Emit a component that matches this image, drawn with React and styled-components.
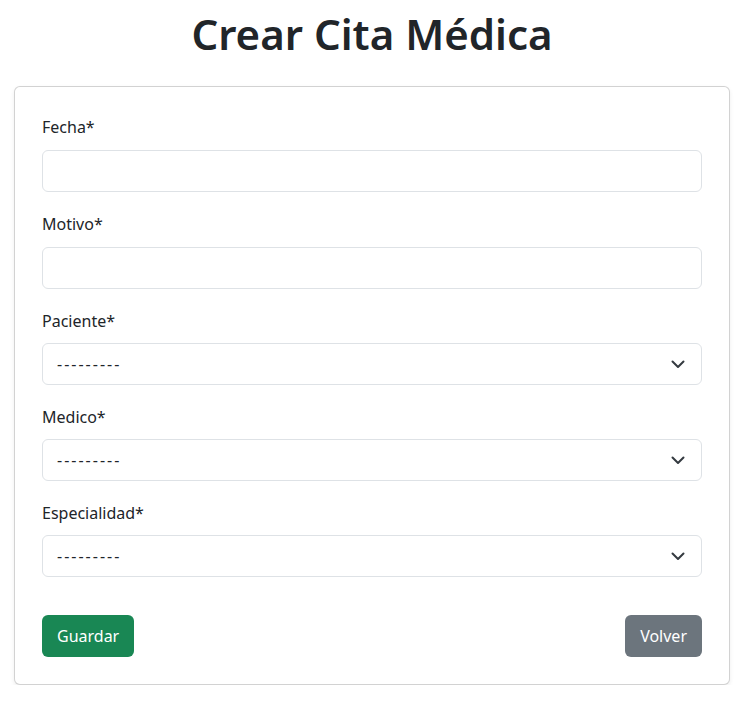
import React from "react";
import styled, { createGlobalStyle } from "styled-components";

const Global = createGlobalStyle`
  html, body { margin: 0; padding: 0; background: #fff; }
  body {
    font-family: "Noto Sans", "Open Sans", sans-serif;
    color: #212529;
    font-size: 16px;
  }
  * { box-sizing: border-box; }
`;

const Page = styled.div`
  width: 754px;
  padding: 0 24px 0 14px;
`;

const Title = styled.h1`
  margin: 0;
  padding-top: 6px;
  height: 86px;
  text-align: center;
  font-size: 42px;
  line-height: 56px;
  font-weight: 600;
  color: #212529;
`;

const Card = styled.form`
  border: 1px solid rgba(0, 0, 0, 0.175);
  border-radius: 6px;
  box-shadow: 0 2px 4px rgba(0, 0, 0, 0.075);
  padding: 27px 27px 27px 27px;
  background: #fff;
`;

const Group = styled.div`
  margin-bottom: ${(p) => (p.$last ? "0" : "19px")};
`;

const Label = styled.label`
  display: block;
  font-size: 16px;
  line-height: 26px;
  margin-bottom: 10px;
  color: #212529;
`;

const Input = styled.input`
  display: block;
  width: 100%;
  height: 42px;
  border: 1px solid #dee2e6;
  border-radius: 6px;
  padding: 6px 14px;
  font: inherit;
  background: #fff;
  outline: none;
`;

const SelectBox = styled.div`
  position: relative;
  display: flex;
  align-items: center;
  height: 42px;
  margin-top: -1px;
  border: 1px solid #dee2e6;
  border-radius: 6px;
  padding: 0 14px;
  background: #fff;
  font-size: 16px;
  color: #212529;
`;

const Placeholder = styled.span`
  letter-spacing: 2px;
`;

const Chevron = styled.svg`
  position: absolute;
  right: 16px;
  top: 50%;
  transform: translateY(-50%);
`;

const Actions = styled.div`
  display: flex;
  justify-content: space-between;
  margin-top: 38px;
`;

const Button = styled.button`
  height: 42px;
  padding: 0 15px;
  border: none;
  border-radius: 6px;
  font: inherit;
  font-size: 16px;
  color: #fff;
  background: ${(p) => (p.$variant === "secondary" ? "#6c757d" : "#198754")};
  cursor: pointer;
`;

function Select() {
  return (
    <SelectBox>
      <Placeholder>---------</Placeholder>
      <Chevron width="14" height="10" viewBox="0 0 14 10">
        <path d="M1.5 2.5l5.5 5.5 5.5-5.5" fill="none" stroke="#343a40" strokeWidth="2" strokeLinecap="round" strokeLinejoin="round" />
      </Chevron>
    </SelectBox>
  );
}

export default function App() {
  return (
    <Page>
      <Global />
      <Title>Crear Cita Médica</Title>
      <Card onSubmit={(e) => e.preventDefault()}>
        <Group>
          <Label>Fecha*</Label>
          <Input type="text" />
        </Group>
        <Group>
          <Label>Motivo*</Label>
          <Input type="text" />
        </Group>
        <Group>
          <Label>Paciente*</Label>
          <Select />
        </Group>
        <Group>
          <Label>Medico*</Label>
          <Select />
        </Group>
        <Group $last>
          <Label>Especialidad*</Label>
          <Select />
        </Group>
        <Actions>
          <Button type="submit">Guardar</Button>
          <Button type="button" $variant="secondary">Volver</Button>
        </Actions>
      </Card>
    </Page>
  );
}
